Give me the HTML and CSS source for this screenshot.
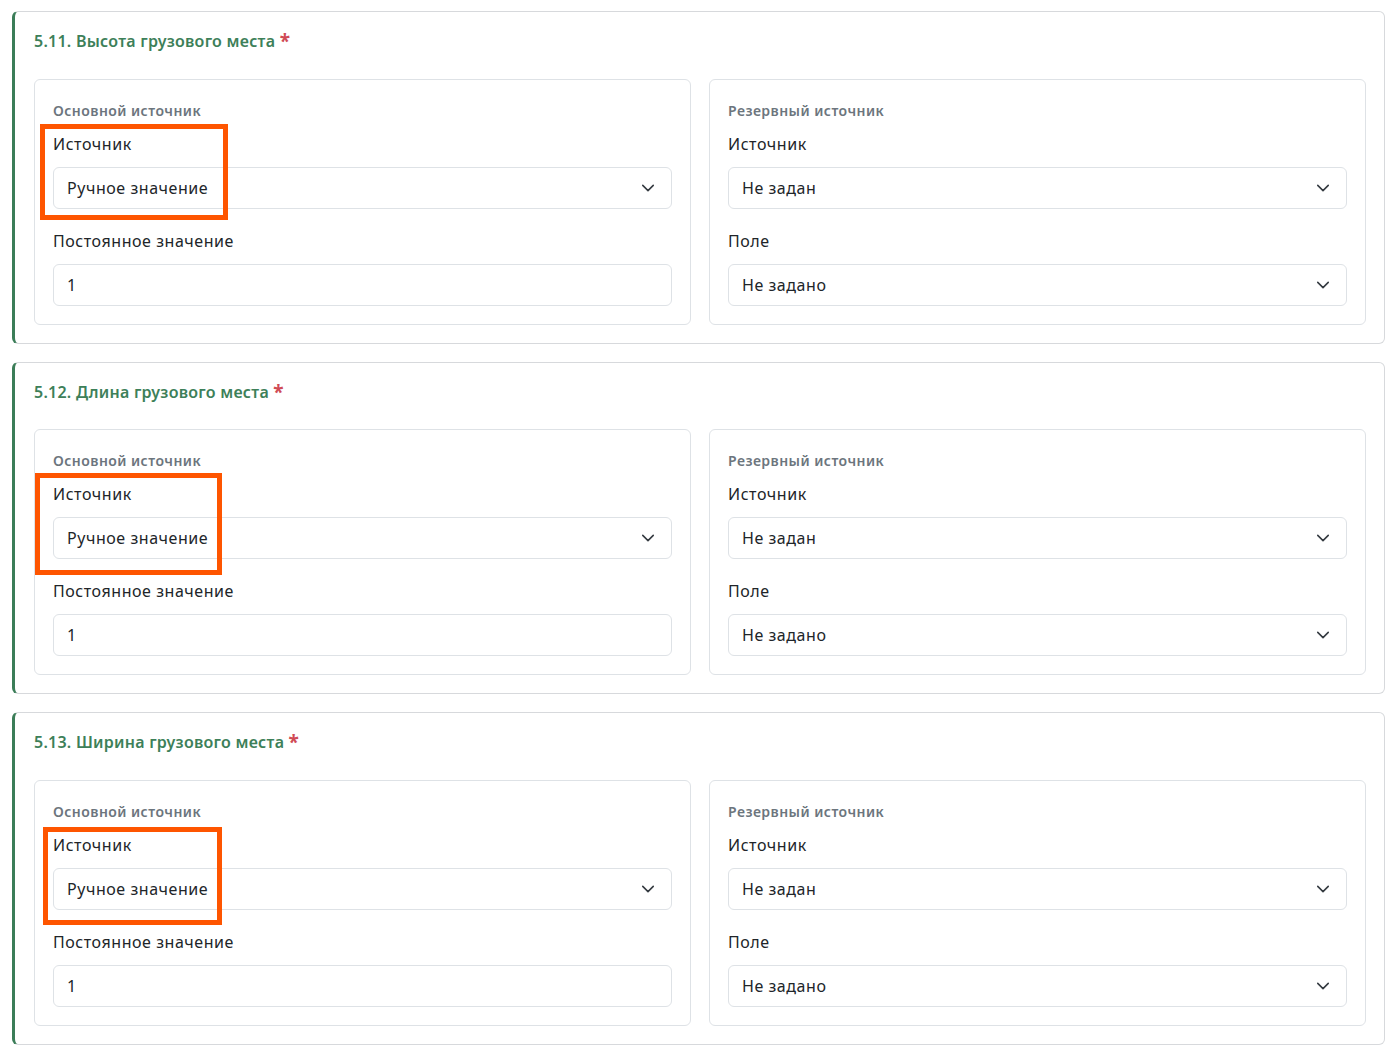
FILE: index.html
```html
<!DOCTYPE html>
<html lang="ru">
<head>
  <meta charset="UTF-8">
  <meta name="viewport" content="width=device-width, initial-scale=1">
  <title>Параметры грузового места</title>
  <link rel="stylesheet" href="styles.css">
</head>
<body>
  <main class="fields">

    <section class="field-card">
      <h3 class="field-title">5.11. Высота грузового места <span class="req">*</span></h3>
      <div class="sources">
        <div class="source">
          <div class="source-caption">Основной источник</div>
          <label class="form-label">Источник</label>
          <div class="form-select">Ручное значение<svg class="chev" viewBox="0 0 16 16"><path d="M2 5l6 6 6-6"/></svg></div>
          <label class="form-label">Постоянное значение</label>
          <div class="form-control">1</div>
        </div>
        <div class="source">
          <div class="source-caption">Резервный источник</div>
          <label class="form-label">Источник</label>
          <div class="form-select">Не задан<svg class="chev" viewBox="0 0 16 16"><path d="M2 5l6 6 6-6"/></svg></div>
          <label class="form-label">Поле</label>
          <div class="form-select">Не задано<svg class="chev" viewBox="0 0 16 16"><path d="M2 5l6 6 6-6"/></svg></div>
        </div>
      </div>
      <div class="mark mark-1"></div>
    </section>

    <section class="field-card">
      <h3 class="field-title">5.12. Длина грузового места <span class="req">*</span></h3>
      <div class="sources">
        <div class="source">
          <div class="source-caption">Основной источник</div>
          <label class="form-label">Источник</label>
          <div class="form-select">Ручное значение<svg class="chev" viewBox="0 0 16 16"><path d="M2 5l6 6 6-6"/></svg></div>
          <label class="form-label">Постоянное значение</label>
          <div class="form-control">1</div>
        </div>
        <div class="source">
          <div class="source-caption">Резервный источник</div>
          <label class="form-label">Источник</label>
          <div class="form-select">Не задан<svg class="chev" viewBox="0 0 16 16"><path d="M2 5l6 6 6-6"/></svg></div>
          <label class="form-label">Поле</label>
          <div class="form-select">Не задано<svg class="chev" viewBox="0 0 16 16"><path d="M2 5l6 6 6-6"/></svg></div>
        </div>
      </div>
      <div class="mark mark-2"></div>
    </section>

    <section class="field-card">
      <h3 class="field-title">5.13. Ширина грузового места <span class="req">*</span></h3>
      <div class="sources">
        <div class="source">
          <div class="source-caption">Основной источник</div>
          <label class="form-label">Источник</label>
          <div class="form-select">Ручное значение<svg class="chev" viewBox="0 0 16 16"><path d="M2 5l6 6 6-6"/></svg></div>
          <label class="form-label">Постоянное значение</label>
          <div class="form-control">1</div>
        </div>
        <div class="source">
          <div class="source-caption">Резервный источник</div>
          <label class="form-label">Источник</label>
          <div class="form-select">Не задан<svg class="chev" viewBox="0 0 16 16"><path d="M2 5l6 6 6-6"/></svg></div>
          <label class="form-label">Поле</label>
          <div class="form-select">Не задано<svg class="chev" viewBox="0 0 16 16"><path d="M2 5l6 6 6-6"/></svg></div>
        </div>
      </div>
      <div class="mark mark-3"></div>
    </section>

  </main>
</body>
</html>
```

FILE: styles.css
```css
body { margin: 0; background: #fff; font-family: "Noto Sans", "Open Sans", sans-serif; color: #212529; }
.fields { padding: 11px 13px 0 12px; display: flex; flex-direction: column; gap: 18px; }
.field-card { position: relative; border: 1px solid #d7d9dc; border-left: 3px solid #3b7d58; border-radius: 6px; padding: 18px 18px 18px 19px; }
.field-title { margin: 0 0 26.5px; font-size: 16px; line-height: 22px; height: 22px; font-weight: 600; color: #3d8059; letter-spacing: 0.25px; }
.req { color: #d04a55; font-size: 19px; font-weight: 700; line-height: 0; vertical-align: -1px; }
.sources { display: grid; grid-template-columns: 1fr 1fr; gap: 18px; }
.source { border: 1px solid #dee2e6; border-radius: 6px; padding: 21px 18px 18px; display: flex; flex-direction: column; }
.source-caption { font-size: 14px; line-height: 20px; font-weight: 600; color: #6c757d; margin-bottom: 11px; letter-spacing: 0.45px; }
.form-label { display: block; font-size: 16px; line-height: 24px; margin-bottom: 11px; letter-spacing: 0.55px; }
.form-select, .form-control { height: 40px; border: 1px solid #dee2e6; border-radius: 6px; padding: 0 13px; display: flex; align-items: center; font-size: 16px; letter-spacing: 0.55px; box-sizing: content-box; }
.form-select { justify-content: space-between; margin-bottom: 20px; }
.form-select:last-child { margin-bottom: 0; }
.chev { width: 14px; height: 14px; margin-right: 3px; }
.chev path { fill: none; stroke: #343a40; stroke-width: 1.8; stroke-linecap: round; stroke-linejoin: round; }
/* orange highlight frames */
.mark { position: absolute; border: 5px solid #fe5500; box-sizing: border-box; pointer-events: none; }
.mark-1 { left: 25px; top: 112px; width: 188px; height: 96px; }
.mark-2 { left: 20px; top: 110px; width: 187px; height: 102px; }
.mark-3 { left: 28px; top: 114px; width: 179px; height: 98px; }
```
